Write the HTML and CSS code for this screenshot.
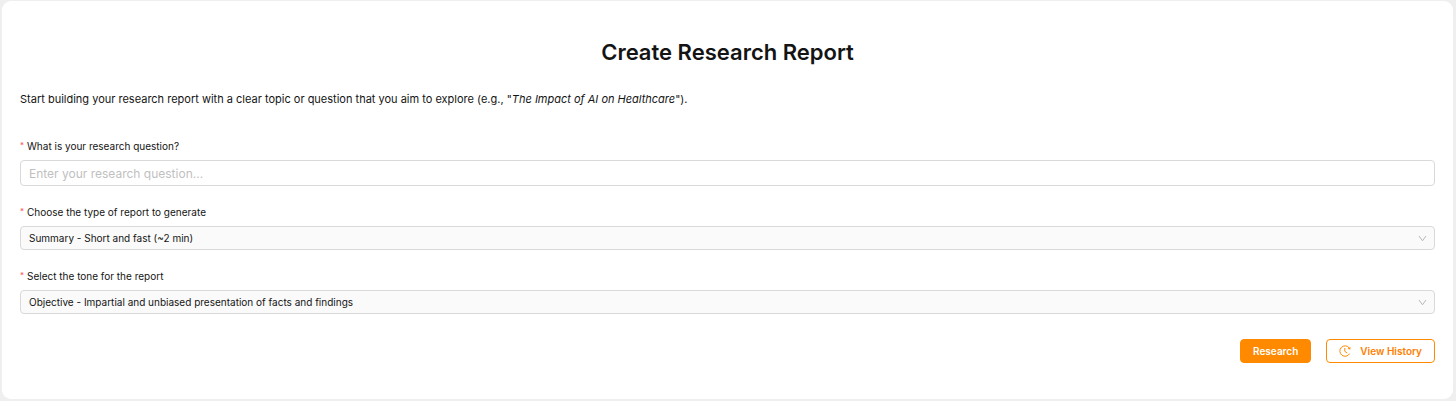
FILE: index.html
```html
<!DOCTYPE html>
<html lang="en">

<head>
    <meta charset="UTF-8">
    <meta name="viewport" content="width=device-width, initial-scale=1.0">
    <title>Create Research Report</title>
    <link rel="stylesheet" href="styles.css">
</head>

<body>
    <main class="card">
        <h1 class="card__title">Create Research Report</h1>
        <p class="card__intro">Start building your research report with a clear topic or question that you aim to explore (e.g., "<em>The Impact of AI on Healthcare</em>").</p>

        <form class="form">
            <div class="field">
                <label class="field__label" for="question"><span class="field__mark">*</span>What is your research question?</label>
                <input type="text" class="field__input" id="question" placeholder="Enter your research question..." required>
            </div>

            <div class="field">
                <label class="field__label" for="type"><span class="field__mark">*</span>Choose the type of report to generate</label>
                <div class="select">
                    <select class="select__control" id="type" required>
                        <option>Summary - Short and fast (~2 min)</option>
                    </select>
                    <svg class="select__arrow" viewBox="0 0 9 9" aria-hidden="true">
                        <path d="M1 2l3.5 4.8L8 2" />
                    </svg>
                </div>
            </div>

            <div class="field">
                <label class="field__label" for="tone"><span class="field__mark">*</span>Select the tone for the report</label>
                <div class="select">
                    <select class="select__control" id="tone" required>
                        <option>Objective - Impartial and unbiased presentation of facts and findings</option>
                    </select>
                    <svg class="select__arrow" viewBox="0 0 9 9" aria-hidden="true">
                        <path d="M1 2l3.5 4.8L8 2" />
                    </svg>
                </div>
            </div>

            <div class="actions">
                <button type="submit" class="button button--primary">Research</button>
                <button type="button" class="button button--outline">
                    <svg class="button__icon" viewBox="0 0 12 12" aria-hidden="true">
                        <path d="M10.6 8.6A5.2 5.2 0 1 1 10.2 2.9" />
                        <path d="M5.8 3v3.3l2.4 1.8" />
                        <path class="button__icon-tip" d="M11.4 1.7v2.8l-2.8-.6z" />
                    </svg>
                    View History
                </button>
            </div>
        </form>
    </main>
</body>

</html>
```
FILE: styles.css
```css
* {
    box-sizing: border-box;
}

body {
    margin: 0;
    padding: 1px 3px 2px 2px;
    min-height: 100vh;
    display: flex;
    background-color: #efefef;
    color: #141414;
    font-family: Inter, sans-serif;
    font-size: 10px;
}

.card {
    flex: 1;
    padding: 36px 18px;
    border-radius: 9px;
    background-color: #fff;
}

.card__title {
    margin: 0 0 24px;
    font-size: 22px;
    font-weight: 600;
    line-height: 30px;
    text-align: center;
}

.card__intro {
    margin: 0 0 31px;
    font-size: 11px;
    line-height: 16px;
}

.field {
    display: flex;
    flex-direction: column;
    gap: 6px;
    margin-bottom: 18px;
}

.field__label {
    display: flex;
    gap: 3px;
    line-height: 16px;
}

.field__mark {
    color: #ff4d4f;
    font-size: 8px;
    line-height: 14px;
}

.field__input,
.select__control {
    width: 100%;
    margin: 0;
    padding: 0 8px;
    border: 1px solid #d9d9d9;
    border-radius: 4px;
    color: inherit;
    font-family: inherit;
}

.field__input {
    height: 26px;
    background-color: #fff;
    font-size: 12px;
}

.field__input::placeholder {
    color: #bfbfbf;
}

.select {
    display: grid;
    align-items: center;
}

.select__control,
.select__arrow {
    grid-area: 1 / 1;
}

.select__control {
    height: 24px;
    appearance: none;
    background-color: #fafafa;
    font-size: 10px;
}

.select__arrow {
    justify-self: end;
    width: 9px;
    height: 9px;
    margin-right: 8px;
    fill: none;
    stroke: #b8b8b8;
    pointer-events: none;
}

.actions {
    display: flex;
    justify-content: flex-end;
    gap: 15px;
    margin-top: 25px;
}

.button {
    display: flex;
    align-items: center;
    gap: 9px;
    height: 24px;
    padding: 0 12px;
    border: 1px solid #ff8a00;
    border-radius: 4px;
    font-family: inherit;
    font-size: 10px;
    font-weight: 600;
}

.button--primary {
    background-color: #ff8a00;
    color: #fff;
}

.button--outline {
    background-color: #fff;
    color: #ff8000;
}

.button__icon {
    width: 12px;
    height: 12px;
    fill: none;
    stroke: #ff8a00;
}

.button__icon-tip {
    fill: #ff8a00;
    stroke: none;
}
```
